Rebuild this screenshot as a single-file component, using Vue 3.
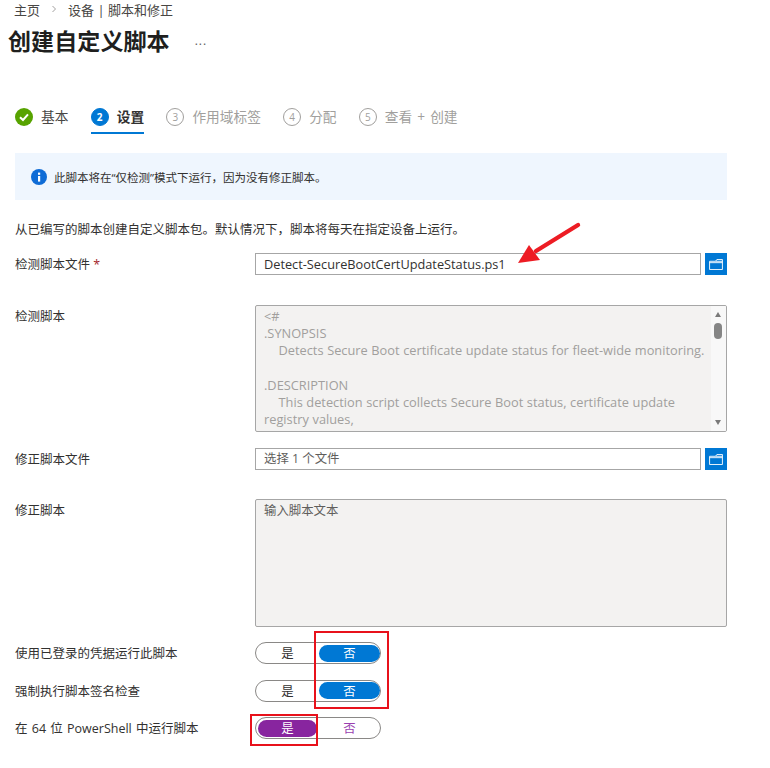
<script setup>
const steps = [
  { n: '2', label: '设置', state: 'active' },
  { n: '3', label: '作用域标签', state: 'todo' },
  { n: '4', label: '分配', state: 'todo' },
  { n: '5', label: '查看 + 创建', state: 'todo' },
]
const toggles = [
  { label: '使用已登录的凭据运行此脚本', on: 'no', tone: 'blue' },
  { label: '强制执行脚本签名检查', on: 'no', tone: 'blue' },
  { label: '在 64 位 PowerShell 中运行脚本', on: 'yes', tone: 'purple' },
]
const scriptText = `<#
.SYNOPSIS
    Detects Secure Boot certificate update status for fleet-wide monitoring.

.DESCRIPTION
    This detection script collects Secure Boot status, certificate update
registry values,
    and device information. It outputs a JSON string for monitoring and reporting.`
</script>

<template>
  <div class="page">
    <nav class="crumbs">
      <span>主页</span>
      <svg class="chev" width="6" height="8" viewBox="0 0 6 8"><path d="M1.5 1 L4.5 4 L1.5 7" fill="none" stroke="#8a8886" stroke-width="0.8" /></svg>
      <span>设备 | 脚本和修正</span>
    </nav>
    <header class="title-row">
      <h1>创建自定义脚本</h1>
      <span class="more">...</span>
    </header>

    <div class="steps">
      <div class="step">
        <svg width="18" height="18" viewBox="0 0 18 18"><circle cx="9" cy="9" r="9" fill="#57a300" /><path d="M5 9.2 L8 12 L13 6.4" fill="none" stroke="#fff" stroke-width="2" /></svg>
        <span class="step-label done">基本</span>
      </div>
      <div v-for="s in steps" :key="s.n" class="step" :class="s.state">
        <span class="num">{{ s.n }}</span>
        <span class="step-label">{{ s.label }}</span>
      </div>
    </div>

    <div class="banner">
      <svg width="16" height="16" viewBox="0 0 16 16"><circle cx="8" cy="8" r="8" fill="#0f6cd6" /><rect x="7" y="7" width="2.2" height="5.6" fill="#fff" /><rect x="7" y="3.6" width="2.2" height="2.2" fill="#fff" /></svg>
      <span>此脚本将在“仅检测”模式下运行，因为没有修正脚本。</span>
    </div>

    <p class="desc">从已编写的脚本创建自定义脚本包。默认情况下，脚本将每天在指定设备上运行。</p>

    <div class="row file-row first">
      <label>检测脚本文件 <em>*</em></label>
      <div class="file">
        <div class="input value">Detect-SecureBootCertUpdateStatus.ps1</div>
        <button class="folder" type="button">
          <svg width="14" height="11" viewBox="0 0 15 12"><path d="M0.5 11.5 V2.5 H7 L8.5 0.5 H14.5 V11.5 Z M0.5 4 H14.5 M7 2.5 H14.5" fill="none" stroke="#fff" stroke-width="1" /></svg>
        </button>
      </div>
    </div>

    <div class="row area-row detect">
      <label>检测脚本</label>
      <div class="area">
        <div class="area-text">{{ scriptText }}</div>
        <div class="scroll">
          <i class="up"></i>
          <i class="thumb"></i>
          <i class="down"></i>
        </div>
      </div>
    </div>

    <div class="row file-row fix">
      <label>修正脚本文件</label>
      <div class="file">
        <div class="input placeholder">选择 1 个文件</div>
        <button class="folder" type="button">
          <svg width="14" height="11" viewBox="0 0 15 12"><path d="M0.5 11.5 V2.5 H7 L8.5 0.5 H14.5 V11.5 Z M0.5 4 H14.5 M7 2.5 H14.5" fill="none" stroke="#fff" stroke-width="1" /></svg>
        </button>
      </div>
    </div>

    <div class="row area-row remedy">
      <label>修正脚本</label>
      <div class="area tall"><div class="area-text">输入脚本文本</div></div>
    </div>

    <div class="toggles">
      <div v-for="t in toggles" :key="t.label" class="row toggle-row">
        <label>{{ t.label }}</label>
        <div class="pill" :class="t.tone">
          <span class="opt yes" :class="{ sel: t.on === 'yes' }">是</span>
          <span class="opt no" :class="{ sel: t.on === 'no' }">否</span>
        </div>
      </div>
    </div>

    <svg class="arrow" width="70" height="48" viewBox="0 0 70 48">
      <path d="M64 4 L22 30" stroke="#ed1c24" stroke-width="4.4" stroke-linecap="round" fill="none" />
      <path d="M4 42 L15 24 L26 39 Z" fill="#ed1c24" />
    </svg>
    <div class="mark mark-no"></div>
    <div class="mark mark-yes"></div>
  </div>
</template>

<style scoped>
.page {
  position: relative;
  width: 770px;
  height: 768px;
  overflow: hidden;
  background: #fff;
  color: #323130;
  font-family: "Open Sans", "Noto Sans CJK SC", sans-serif;
  font-size: 12px;
}
.crumbs {
  display: flex;
  align-items: center;
  gap: 11px;
  height: 18px;
  padding-left: 14px;
  font-size: 13px;
  color: #484644;
}
.title-row {
  display: flex;
  align-items: center;
  height: 40px;
  margin-top: 3px;
  padding-left: 8px;
}
h1 {
  margin: 0;
  font-size: 23px;
  line-height: 40px;
  font-weight: 700;
  letter-spacing: 0.1px;
  color: #201f1e;
}
.more {
  margin-left: 25px;
  font-size: 12px;
  line-height: 12px;
  letter-spacing: 1px;
  color: #605e5c;
}
.steps {
  display: flex;
  align-items: flex-start;
  gap: 22.3px;
  height: 30px;
  margin-top: 43px;
  padding-left: 15px;
}
.step {
  display: flex;
  align-items: center;
  gap: 8px;
  height: 26px;
  font-size: 13.7px;
}
.step-label {
  line-height: 20px;
  white-space: nowrap;
  word-spacing: 1.5px;
  color: #a19f9d;
}
.step-label.done {
  color: #484644;
}
.num {
  display: flex;
  align-items: center;
  justify-content: center;
  width: 18px;
  height: 18px;
  box-sizing: border-box;
  border: 1px solid #a19f9d;
  border-radius: 50%;
  font-size: 10px;
  color: #a19f9d;
}
.active {
  height: 30px;
  padding-bottom: 2px;
  box-sizing: border-box;
  border-bottom: 2px solid #0078d4;
}
.active .num {
  background: #0078d4;
  border-color: #0078d4;
  color: #fff;
  font-weight: 700;
}
.active .step-label {
  color: #323130;
  font-weight: 700;
}
.banner {
  display: flex;
  align-items: center;
  gap: 7px;
  height: 47px;
  margin: 19px 43px 0 15px;
  padding-left: 16px;
  background: #eff6fe;
  font-size: 11.5px;
  color: #323130;
}
.desc {
  margin: 21px 0 0 15px;
  height: 18px;
  line-height: 18px;
  font-size: 12.5px;
  color: #323130;
}
.row {
  display: grid;
  grid-template-columns: 240px 472px;
  margin-left: 15px;
}
label {
  padding-top: 1px;
  font-size: 12.5px;
  line-height: 22px;
  color: #323130;
  white-space: nowrap;
}
label em {
  font-style: normal;
  color: #a4262c;
}
.first {
  margin-top: 14px;
}
.file {
  display: flex;
  gap: 4px;
}
.input {
  width: 446px;
  height: 22px;
  box-sizing: border-box;
  border: 1px solid #a6a6a6;
  padding-left: 8px;
  line-height: 20px;
  white-space: nowrap;
}
.value {
  font-size: 12.75px;
  color: #323130;
}
.placeholder {
  font-size: 12.4px;
  color: #605e5c;
}
.folder {
  display: flex;
  align-items: center;
  justify-content: center;
  width: 22px;
  height: 22px;
  padding: 0;
  border: 0;
  background: #0078d4;
}
.detect {
  margin-top: 29px;
}
.area {
  position: relative;
  display: flex;
  height: 127px;
  box-sizing: border-box;
  border: 1px solid #a6a6a6;
  border-radius: 2px;
  background: #f3f2f1;
  overflow: hidden;
}
.tall {
  height: 128px;
}
.area-text {
  flex: 1;
  min-width: 0;
  padding: 2px 2px 2px 8px;
  font-size: 12.8px;
  line-height: 17.2px;
  word-spacing: 0.3px;
  white-space: pre-wrap;
  color: #a19f9d;
  overflow: hidden;
}
.tall .area-text {
  font-size: 12.4px;
  color: #605e5c;
}
.scroll {
  position: relative;
  flex: none;
  width: 15px;
  background: #f8f8f8;
}
.scroll i {
  position: absolute;
  display: block;
}
.up,
.down {
  left: 4px;
  width: 0;
  height: 0;
  border-left: 3.5px solid transparent;
  border-right: 3.5px solid transparent;
}
.up {
  top: 6px;
  border-bottom: 5px solid #7a7a7a;
}
.down {
  bottom: 6px;
  border-top: 5px solid #7a7a7a;
}
.thumb {
  top: 17px;
  left: 3px;
  width: 8px;
  height: 16px;
  border-radius: 4px;
  background: #858585;
}
.fix {
  margin-top: 16px;
}
.remedy {
  margin-top: 28px;
}
.toggles {
  display: flex;
  flex-direction: column;
  gap: 15.5px;
  margin-top: 15px;
}
.toggle-row {
  height: 22px;
}
.toggle-row label {
  line-height: 22px;
  word-spacing: 1px;
}
.pill {
  display: flex;
  align-items: center;
  width: 126px;
  height: 22px;
  box-sizing: border-box;
  padding: 2px 0 2px 2px;
  border: 1px solid #8a8886;
  border-radius: 11px;
}
.opt {
  display: flex;
  align-items: center;
  justify-content: center;
  height: 17px;
  border-radius: 9px;
  font-size: 12.4px;
  color: #323130;
}
.yes {
  flex: none;
  width: 59px;
}
.no {
  flex: 1;
  margin-left: 2px;
}
.purple .opt {
  color: #9a3fb0;
}
.blue .sel {
  background: #0078d4;
  color: #fff;
}
.purple .sel {
  background: #88259f;
  color: #fff;
}
.arrow {
  position: absolute;
  left: 514px;
  top: 221px;
}
.mark {
  position: absolute;
  box-sizing: border-box;
  border: 2px solid #e8111b;
}
.mark-no {
  left: 314px;
  top: 631px;
  width: 75px;
  height: 78px;
}
.mark-yes {
  left: 250px;
  top: 714px;
  width: 68px;
  height: 32px;
}
</style>
